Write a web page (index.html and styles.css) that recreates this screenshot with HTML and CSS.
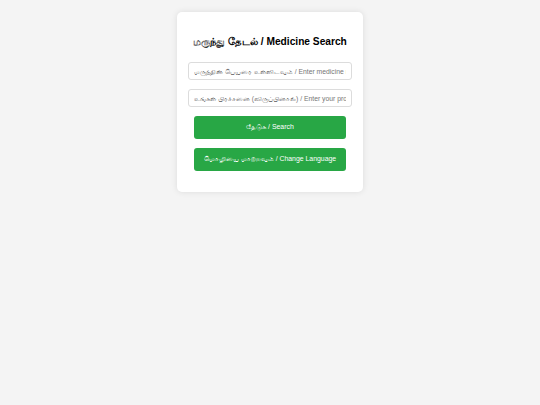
FILE: index.html
```html
<!DOCTYPE html>
<html lang="ta">
<head>
<meta charset="utf-8">
<title>Medicine Search</title>
<link rel="stylesheet" href="styles.css">
</head>
<body>
<div class="card">
  <h2 class="title">மருந்து தேடல் / Medicine Search</h2>
  <input class="field" type="text" placeholder="மருந்தின் பெயரை உள்ளிடவும் / Enter medicine name">
  <input class="field" type="text" placeholder="உங்கள் பிரச்சனை (விருப்பினால்) / Enter your problem">
  <button class="btn" type="button">தேடுக / Search</button>
  <button class="btn" type="button">மொழியை மாற்றவும் / Change Language</button>
</div>
</body>
</html>
```
FILE: styles.css
```css
html, body {
  margin: 0;
  padding: 0;
}
body {
  background: #f4f4f4;
  font-family: "Liberation Sans", Arial, "Noto Sans", sans-serif;
  width: 540px;
  height: 405px;
  display: flex;
  flex-direction: column;
  align-items: center;
}
.card {
  margin-top: 12px;
  width: 186px;
  box-sizing: border-box;
  background: #fff;
  border-radius: 5px;
  box-shadow: 0 0 6px rgba(0,0,0,0.1);
  padding: 0 11px 21px;
  display: flex;
  flex-direction: column;
}
.title {
  margin: 23px 0 13px;
  font-size: 10.2px;
  line-height: 14px;
  font-weight: bold;
  color: #000;
  text-align: center;
}
.field {
  box-sizing: border-box;
  width: 100%;
  height: 18px;
  margin: 0 0 9px;
  padding: 0 5px;
  border: 1px solid #dcdcdc;
  border-radius: 3px;
  font-family: inherit;
  font-size: 6.8px;
  color: #333;
  background: #fff;
}
.field::placeholder {
  color: #767676;
}
.btn {
  box-sizing: border-box;
  align-self: center;
  width: 152px;
  height: 23px;
  margin: 0 0 9px;
  border: none;
  border-radius: 3px;
  background: #28a745;
  color: #fff;
  font-family: inherit;
  font-size: 6.9px;
}
.btn:last-child {
  margin-bottom: 0;
}
```
